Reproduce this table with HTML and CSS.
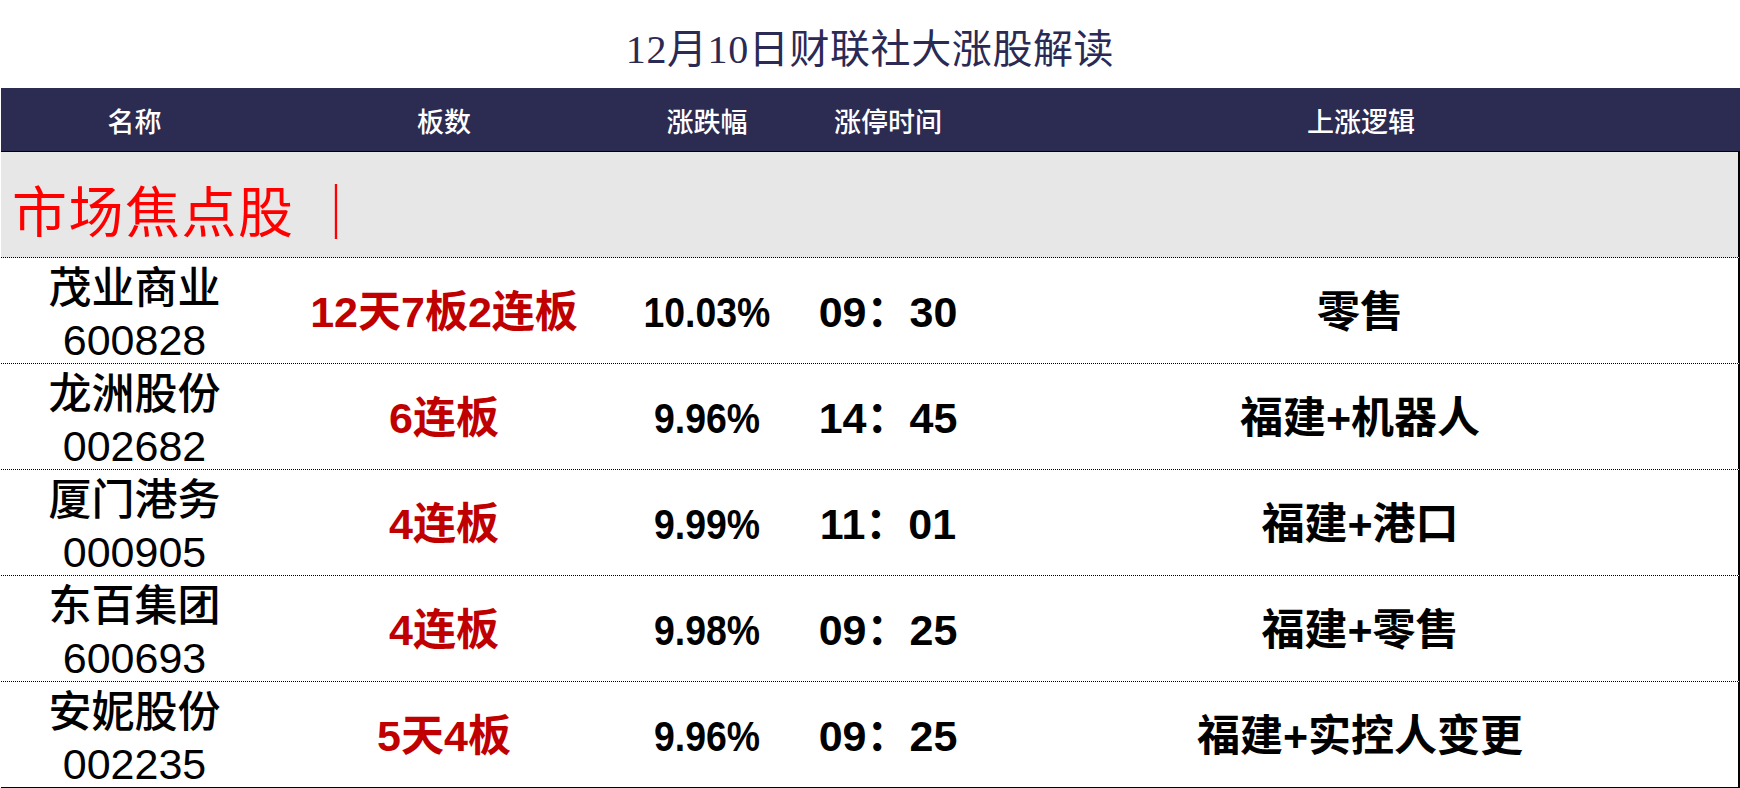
FILE: index.html
```html
<!DOCTYPE html>
<html lang="zh-CN">
<head>
<meta charset="utf-8">
<title>12月10日财联社大涨股解读</title>
<link rel="stylesheet" href="styles.css">
</head>
<body>
<div class="page">
  <h1 class="title">12月10日财联社大涨股解读</h1>
  <div class="table">
    <div class="thead">
      <div class="th">名称</div>
      <div class="th">板数</div>
      <div class="th">涨跌幅</div>
      <div class="th">涨停时间</div>
      <div class="th">上涨逻辑</div>
    </div>
    <div class="band"><span class="band-text">市场焦点股</span><span class="band-bar">｜</span></div>
    <div class="row">
      <div class="cell name"><span>茂业商业</span><span class="code">600828</span></div>
      <div class="cell boards">12天7板2连板</div>
      <div class="cell pct"><span class="narrow">10.03%</span></div>
      <div class="cell time">09：30</div>
      <div class="cell logic">零售</div>
    </div>
    <div class="row">
      <div class="cell name"><span>龙洲股份</span><span class="code">002682</span></div>
      <div class="cell boards">6连板</div>
      <div class="cell pct"><span class="narrow">9.96%</span></div>
      <div class="cell time">14：45</div>
      <div class="cell logic">福建+机器人</div>
    </div>
    <div class="row">
      <div class="cell name"><span>厦门港务</span><span class="code">000905</span></div>
      <div class="cell boards">4连板</div>
      <div class="cell pct"><span class="narrow">9.99%</span></div>
      <div class="cell time">11：01</div>
      <div class="cell logic">福建+港口</div>
    </div>
    <div class="row">
      <div class="cell name"><span>东百集团</span><span class="code">600693</span></div>
      <div class="cell boards">4连板</div>
      <div class="cell pct"><span class="narrow">9.98%</span></div>
      <div class="cell time">09：25</div>
      <div class="cell logic">福建+零售</div>
    </div>
    <div class="row last">
      <div class="cell name"><span>安妮股份</span><span class="code">002235</span></div>
      <div class="cell boards">5天4板</div>
      <div class="cell pct"><span class="narrow">9.96%</span></div>
      <div class="cell time">09：25</div>
      <div class="cell logic">福建+实控人变更</div>
    </div>
  </div>
</div>
</body>
</html>
```
FILE: styles.css
```css
* { box-sizing: border-box; }
html, body { margin: 0; padding: 0; background: #fff; }
body { width: 1740px; height: 788px; overflow: hidden; }

.page { width: 1740px; }

.title {
  margin: 0;
  height: 88px;
  padding-top: 4px;
  display: flex;
  align-items: center;
  justify-content: center;
  font-family: "Liberation Serif", "Noto Sans CJK SC", serif;
  font-weight: 400;
  font-size: 40px;
  letter-spacing: 0.6px;
  color: #2b2a55;
}

.table {
  margin-left: 1px;
  width: 1739px;
  font-family: "Liberation Sans", "Noto Sans CJK SC", sans-serif;
}

.thead, .row {
  display: grid;
  grid-template-columns: 267px 352px 174px 188px 1fr;
}

.thead {
  height: 64px;
  background: #2c2b52;
  border-bottom: 1px solid #000;
}

.th {
  display: flex;
  align-items: center;
  justify-content: center;
  color: #fff;
  font-family: "Noto Sans CJK SC", sans-serif;
  font-size: 27px;
  font-weight: 500;
  padding-top: 2px;
}

.band {
  height: 106px;
  background: #e7e7e7;
  border-bottom: 1px dotted #000;
  border-right: 2px solid #000;
  display: flex;
  align-items: center;
  padding-left: 11px;
  padding-top: 6px;
  color: #ff0000;
  font-family: "Noto Sans CJK SC", serif;
  font-size: 55px;
  font-weight: 400;
}

.band-text { letter-spacing: 1.5px; }
.band-bar { margin-left: 14px; }

.row {
  height: 106px;
  border-bottom: 1px dotted #000;
  border-right: 2px solid #000;
}
.row.last { border-bottom: 1px solid #000; }

.cell {
  display: flex;
  flex-direction: column;
  align-items: center;
  justify-content: center;
  font-size: 43px;
  line-height: 52px;
  color: #000;
  font-weight: 700;
  white-space: nowrap;
}

.name { font-weight: 500; padding-top: 4px; }
.code { font-weight: 400; }

.boards { color: #c00000; }

.narrow {
  display: inline-block;
  transform: scaleX(0.87);
}
```
